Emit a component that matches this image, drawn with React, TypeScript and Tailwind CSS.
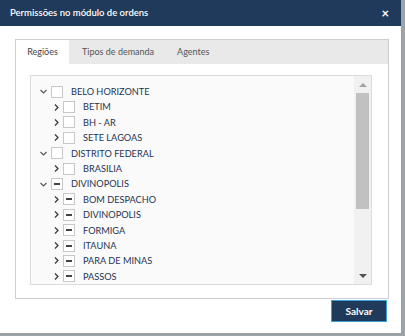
import React from 'react';

type Node = { label: string; level: 0 | 1; state: 'none' | 'partial' };

const rows: Node[] = [
  { label: 'BELO HORIZONTE', level: 0, state: 'none' },
  { label: 'BETIM', level: 1, state: 'none' },
  { label: 'BH - AR', level: 1, state: 'none' },
  { label: 'SETE LAGOAS', level: 1, state: 'none' },
  { label: 'DISTRITO FEDERAL', level: 0, state: 'none' },
  { label: 'BRASILIA', level: 1, state: 'none' },
  { label: 'DIVINOPOLIS', level: 0, state: 'partial' },
  { label: 'BOM DESPACHO', level: 1, state: 'partial' },
  { label: 'DIVINOPOLIS', level: 1, state: 'partial' },
  { label: 'FORMIGA', level: 1, state: 'partial' },
  { label: 'ITAUNA', level: 1, state: 'partial' },
  { label: 'PARA DE MINAS', level: 1, state: 'partial' },
  { label: 'PASSOS', level: 1, state: 'partial' },
];

const ChevronDown = () => (
  <svg width="7" height="5" viewBox="0 0 7 5" className="block">
    <path d="M0.5 1 L3.5 4 L6.5 1" fill="none" stroke="#555" strokeWidth="1.1" />
  </svg>
);

const ChevronRight = () => (
  <svg width="5" height="7" viewBox="0 0 5 7" className="block">
    <path d="M1 0.5 L4 3.5 L1 6.5" fill="none" stroke="#333" strokeWidth="1.2" />
  </svg>
);

const TreeRow = ({ node }: { node: Node }) => {
  const top = node.level === 0;
  return (
    <div className={`flex items-center h-[15.4px] ${top ? 'pl-[9px]' : 'pl-[22px]'}`}>
      <div className={`flex items-center ${top ? 'w-[11px]' : 'w-[10px] pl-[1px]'}`}>
        {top ? <ChevronDown /> : <ChevronRight />}
      </div>
      <div className="w-[12px] h-[12px] border border-[#c8c8c8] bg-white flex items-center justify-center">
        {node.state === 'partial' && <div className="w-[6px] h-[2px] bg-[#444]" />}
      </div>
      <span className="ml-[8px] text-[9.2px] leading-none text-[#1f3350]">{node.label}</span>
    </div>
  );
};

export default function App() {
  return (
    <div className="w-[405px] h-[336px] bg-[#9aa3a8] font-['Lato',sans-serif]">
      <div className="w-[402px] h-[334px] bg-white flex flex-col border-r border-b border-[#a0a0a0]">
        <div className="h-[26px] bg-[#203a5b] flex items-center justify-between pl-[10px] pr-[12px] shrink-0">
          <span className="text-white text-[9.5px] font-semibold">Permissões no módulo de ordens</span>
          <span className="text-white text-[13px] font-bold leading-none">×</span>
        </div>

        <div className="pt-[13px] pl-[15px] pr-[12px]">
          <div className="h-[260px] border border-[#cfcfcf] flex flex-col">
            <div className="h-[24px] bg-[#e9e9e9] flex items-stretch text-[9px] text-[#555] shrink-0">
              <div className="bg-white w-[53px] flex items-center justify-center text-[#444]">Regiões</div>
              <div className="flex items-center pl-[13px]">Tipos de demanda</div>
              <div className="flex items-center pl-[23px]">Agentes</div>
            </div>
            <div className="flex-1 pt-[11px] pl-[14px] pr-[16px] pb-[14px] flex">
              <div className="flex-1 border border-[#dcdcdc] bg-[#fafafa] flex">
                <div className="flex-1 overflow-hidden pt-[8px]">
                  {rows.map((r, i) => (
                    <TreeRow key={i} node={r} />
                  ))}
                </div>
                <div className="w-[17px] bg-[#f1f1f1] flex flex-col items-center">
                  <div className="h-[17px] flex items-center justify-center">
                    <div className="w-0 h-0 border-l-[4px] border-r-[4px] border-b-[4px] border-l-transparent border-r-transparent border-b-[#a3a3a3]" />
                  </div>
                  <div className="w-[13px] h-[116px] bg-[#c1c1c1]" />
                  <div className="flex-1" />
                  <div className="h-[17px] flex items-center justify-center">
                    <div className="w-0 h-0 border-l-[4px] border-r-[4px] border-t-[4px] border-l-transparent border-r-transparent border-t-[#505050]" />
                  </div>
                </div>
              </div>
            </div>
          </div>
        </div>

        <div className="flex justify-end pr-[14px] pt-[1px]">
          <button className="w-[56px] h-[22px] bg-[#203a5b] border border-[#35a4d8] text-white text-[10px] font-bold">
            Salvar
          </button>
        </div>
      </div>
    </div>
  );
}
